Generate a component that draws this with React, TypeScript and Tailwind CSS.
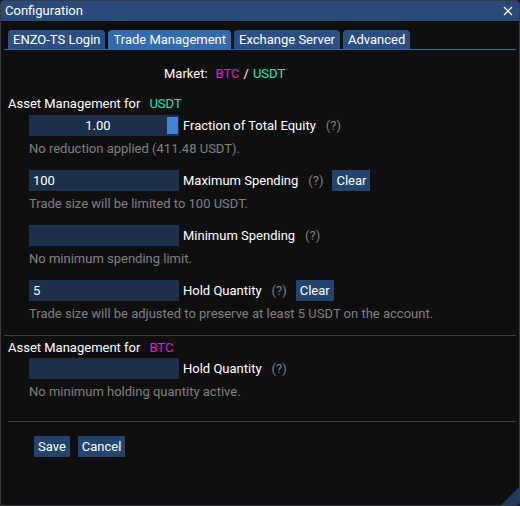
import React from 'react';

const tabs = [
  { label: 'ENZO-TS Login', active: false },
  { label: 'Trade Management', active: true },
  { label: 'Exchange Server', active: false },
  { label: 'Advanced', active: false },
];

function Help() {
  return <span className="ml-[10px] text-[#808080]">(?)</span>;
}

function ClearButton() {
  return (
    <button className="ml-[9px] h-[21px] px-[4px] bg-[#23446c] text-white leading-[21px]">Clear</button>
  );
}

function Field({
  value,
  label,
  note,
  clear,
  slider,
}: {
  value: string;
  label: string;
  note: string;
  clear?: boolean;
  slider?: boolean;
}) {
  return (
    <div className="flex flex-col">
      <div className="flex items-center h-[21px]">
        <div className="relative w-[150px] h-[21px] bg-[#1d2f49] flex items-center">
          {slider ? (
            <>
              <span className="flex-1 text-center">{value}</span>
              <span className="w-[11px] h-[17px] mr-[1px] bg-[#3d85e0]" />
            </>
          ) : (
            <span className="pl-[4px]">{value}</span>
          )}
        </div>
        <span className="ml-[4px]">{label}</span>
        <Help />
        {clear && <ClearButton />}
      </div>
      <div className="mt-[4px] h-[17px] leading-[17px] text-[#808080]">{note}</div>
    </div>
  );
}

export default function App() {
  return (
    <div className="w-[520px] h-[506px] bg-[#1a1a1a]">
      <div
        className="relative w-[520px] h-[506px] flex flex-col rounded-[4px] border border-[#3a3a42] bg-[#0f0f0f] text-white text-[13px] overflow-hidden"
        style={{ fontFamily: 'Roboto, "Noto Sans", sans-serif' }}
      >
        {/* Title bar */}
        <div className="h-[20px] bg-[#294a7a] flex items-center justify-between pl-[4px] pr-[6px] shrink-0">
          <span className="leading-[20px]">Configuration</span>
          <svg width="10" height="10" viewBox="0 0 10 10">
            <path d="M1 1 L9 9 M9 1 L1 9" stroke="#ffffff" strokeWidth="1.3" />
          </svg>
        </div>

        {/* Tabs */}
        <div className="mt-[9px] mx-[3px] flex gap-[3px] pl-[4px] border-b border-[#3369ad]">
          {tabs.map((t) => (
            <div
              key={t.label}
              className={`h-[19px] px-[5px] rounded-t-[4px] leading-[19px] ${
                t.active ? 'bg-[#3369ad]' : 'bg-[#2a4f82]'
              }`}
            >
              {t.label}
            </div>
          ))}
        </div>

        {/* Market */}
        <div className="mt-[15px] h-[17px] leading-[17px] pl-[163px] flex">
          <span>Market:</span>
          <span className="ml-[8px] text-[#e61ec8]">BTC</span>
          <span className="mx-[4px]">/</span>
          <span className="text-[#1de9b6]">USDT</span>
        </div>

        {/* USDT section */}
        <div className="mt-[13px] h-[17px] leading-[17px] pl-[7px] flex">
          <span>Asset Management for</span>
          <span className="ml-[9px] text-[#1de9b6]">USDT</span>
        </div>
        <div className="pl-[28px] mt-[3px] flex flex-col gap-[13px]">
          <Field value="1.00" label="Fraction of Total Equity" note="No reduction applied (411.48 USDT)." slider />
          <Field value="100" label="Maximum Spending" note="Trade size will be limited to 100 USDT." clear />
          <Field value="" label="Minimum Spending" note="No minimum spending limit." />
          <Field
            value="5"
            label="Hold Quantity"
            note="Trade size will be adjusted to preserve at least 5 USDT on the account."
            clear
          />
        </div>

        <div className="mt-[13px] mx-[3px] h-px bg-[#3e3e47]" />

        {/* BTC section */}
        <div className="mt-[3px] h-[17px] leading-[17px] pl-[7px] flex">
          <span>Asset Management for</span>
          <span className="ml-[9px] text-[#e61ec8]">BTC</span>
        </div>
        <div className="pl-[28px] mt-[2px]">
          <Field value="" label="Hold Quantity" note="No minimum holding quantity active." />
        </div>

        <div className="mt-[21px] ml-[7px] mr-[3px] h-px bg-[#3e3e47]" />

        {/* Buttons */}
        <div className="mt-[14px] pl-[33px] flex gap-[8px]">
          <button className="h-[21px] px-[4px] bg-[#23446c] leading-[21px]">Save</button>
          <button className="h-[21px] px-[4px] bg-[#23446c] leading-[21px]">Cancel</button>
        </div>

        {/* Resize grip */}
        <svg width="18" height="18" viewBox="0 0 18 18" className="absolute right-0 bottom-0">
          <path d="M18 0 L18 18 L0 18 Z" fill="#1f3a5e" />
        </svg>
      </div>
    </div>
  );
}
